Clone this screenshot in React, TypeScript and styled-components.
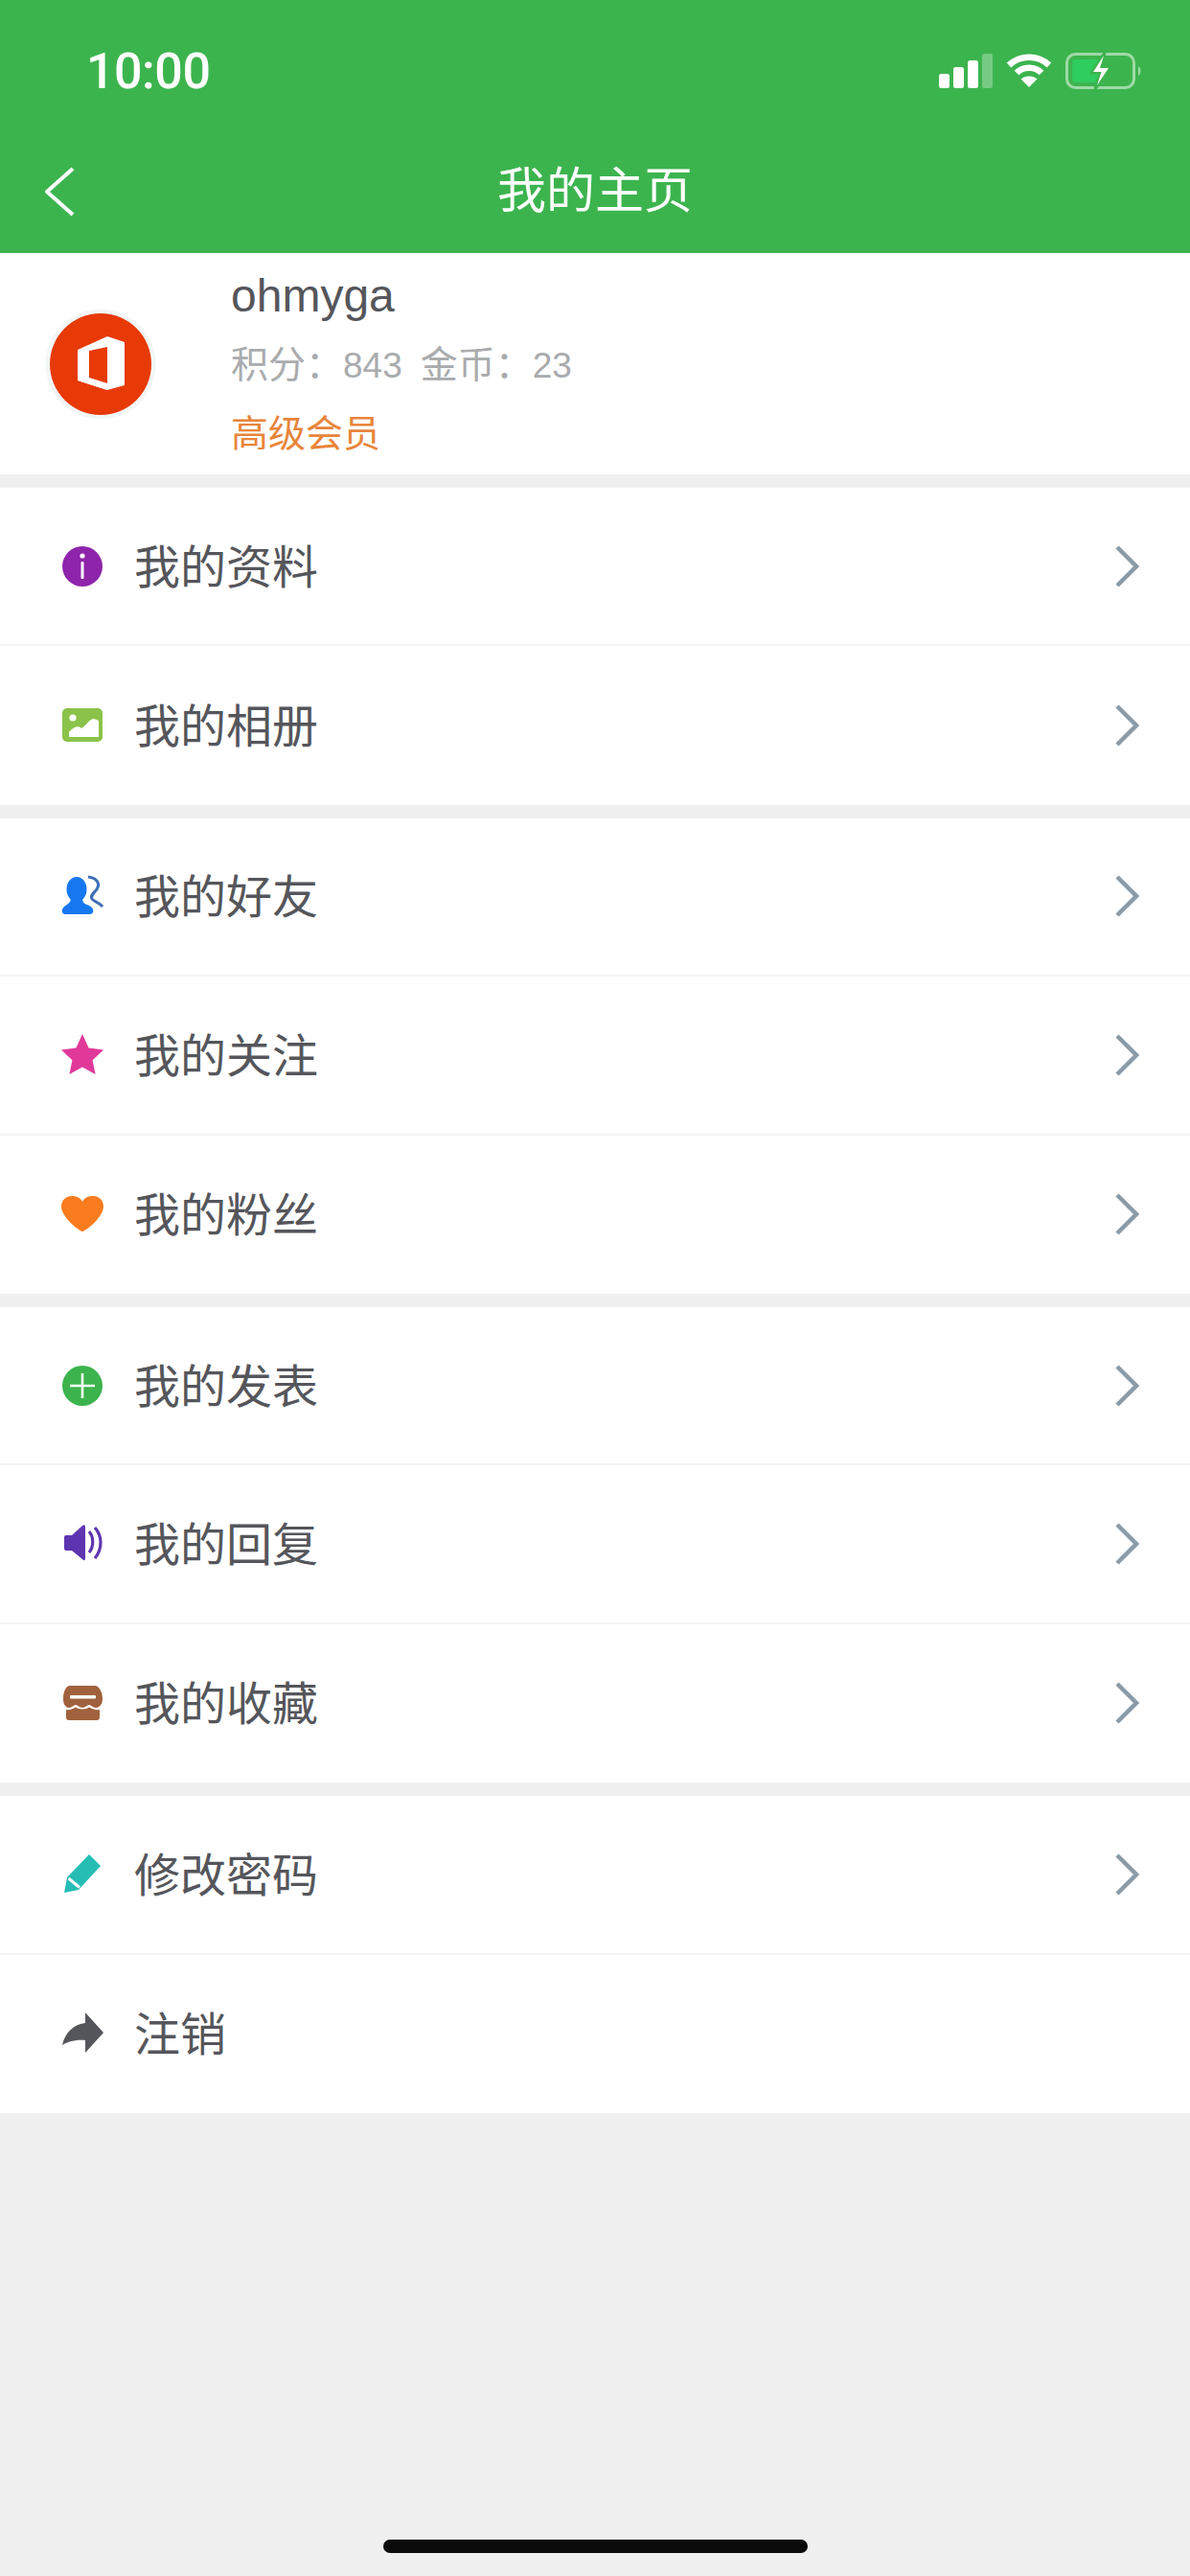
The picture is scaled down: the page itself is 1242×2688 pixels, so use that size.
import React from "react";
import styled, { createGlobalStyle } from "styled-components";

const GlobalStyle = createGlobalStyle`
  html, body {
    margin: 0;
    padding: 0;
    background: #f0f0f0;
  }
  * {
    box-sizing: border-box;
  }
`;

const Page = styled.div`
  position: relative;
  width: 1242px;
  height: 2688px;
  overflow: hidden;
  background: #f0f0f0;
  font-family: "Liberation Sans", "Noto Sans CJK SC", sans-serif;
`;

const Header = styled.header`
  background: #3cb44e;
  color: #fff;
`;

const StatusBar = styled.div`
  height: 148px;
  padding: 0 50px 0 90px;
  display: flex;
  align-items: center;
  justify-content: space-between;
`;

const Time = styled.span`
  font-family: Roboto, "Liberation Sans", sans-serif;
  font-size: 52px;
  font-weight: 500;
  letter-spacing: -0.5px;
`;

const StatusIcons = styled.div`
  display: flex;
  align-items: center;
  gap: 14px;
`;

const NavBar = styled.div`
  height: 116px;
  padding: 0 46px 16px;
  display: grid;
  grid-template-columns: 1fr auto 1fr;
  align-items: center;
`;

const BackSvg = styled.svg`
  width: 32px;
  height: 52px;
  margin-top: 4px;
`;

const Title = styled.h1`
  margin: 0;
  padding-bottom: 6px;
  font-size: 51px;
  font-weight: 400;
`;

const Profile = styled.section`
  height: 231px;
  padding-left: 47px;
  background: #fff;
  display: flex;
  align-items: center;
  gap: 78px;
`;

const Info = styled.div`
  padding-top: 2px;
  line-height: 71px;
`;

const Name = styled.div`
  font-size: 48px;
  color: #55565b;
`;

const Stats = styled.div`
  margin-top: 1px;
  font-size: 39px;
  color: #a9abad;
  display: flex;
  gap: 19px;
`;

const Num = styled.span`
  font-size: 37px;
`;

const Level = styled.div`
  font-size: 39px;
  color: #e8853a;
`;

const Group = styled.section`
  margin-top: 14px;
  background: #fff;
`;

const Row = styled.div`
  height: 165.4px;
  padding: 0 53px 0 64px;
  display: flex;
  align-items: center;
  gap: 32px;
  border-bottom: 2px solid #f4f4f4;

  &:last-child {
    border-bottom: none;
  }
`;

const RowIcon = styled.svg`
  width: 44px;
  height: 44px;
  flex: none;
`;

const RowLabel = styled.span`
  flex: 1;
  padding-bottom: 6px;
  font-size: 48px;
  color: #55565b;
`;

const HomeIndicator = styled.div`
  position: absolute;
  left: 400px;
  bottom: 24px;
  width: 443px;
  height: 14px;
  border-radius: 7px;
  background: #0b0b0b;
`;

const Signal = () => (
  <svg width="58" height="36" viewBox="0 0 58 36">
    <rect x="2" y="21" width="11" height="15" rx="2.5" fill="#fff" />
    <rect x="17" y="14" width="11" height="22" rx="2.5" fill="#fff" />
    <rect x="32" y="7" width="11" height="29" rx="2.5" fill="#fff" />
    <rect x="47" y="0" width="11" height="36" rx="2.5" fill="#fff" opacity="0.3" />
  </svg>
);

const Wifi = () => (
  <svg width="48" height="36" viewBox="0 0 48 36" fill="none" stroke="#fff" strokeWidth="6.5">
    <path d="M3 12 C15 1 33 1 45 12" />
    <path d="M11 20 C18 13 30 13 37 20" />
    <path d="M24 35 L15.5 26.5 C20 22.5 28 22.5 32.5 26.5 Z" fill="#fff" stroke="none" />
  </svg>
);

const Battery = () => (
  <svg width="80" height="38" viewBox="0 0 80 38">
    <rect x="1.5" y="1.5" width="70" height="35" rx="9" fill="none" stroke="#fff" strokeOpacity="0.5" strokeWidth="3" />
    <rect x="7" y="7" width="30" height="24" rx="4" fill="#2fcc5e" />
    <path d="M76 14 C79 15.5 79.5 22 76 24 Z" fill="#fff" fillOpacity="0.5" />
    <path d="M41 0 L27 21 L36 21 L31 38 L47 15 L37.5 15 Z" fill="#3cb44e" stroke="#3cb44e" strokeWidth="3" />
    <path d="M40 3 L29 20 L37.5 20 L33 34 L45 16 L36 16 Z" fill="#fff" />
  </svg>
);

const BackArrow = () => (
  <BackSvg viewBox="0 0 32 52" fill="none" stroke="#fff" strokeWidth="4">
    <path d="M30 2 L3 26 L30 50" strokeLinejoin="round" />
  </BackSvg>
);

const OfficeAvatar = () => (
  <svg width="116" height="116" viewBox="0 0 116 116">
    <circle cx="58" cy="58" r="57.5" fill="#f3f6f7" />
    <circle cx="58" cy="58" r="53" fill="#e73a06" />
    <path d="M34 43 L65 29 L83 35 L83 80 L65 85 L34 75 Z" fill="#fff" />
    <path d="M46 44 L65 40 L65 78 L46 72 Z" fill="#e73a06" />
    <path d="M34 75 L65 78 L65 85 Z" fill="#fff" />
  </svg>
);

const Chevron = () => (
  <svg width="26" height="44" viewBox="0 0 26 44" fill="none" stroke="#8a9ba8" strokeWidth="4.5">
    <path d="M3 2 L23 22 L3 42" />
  </svg>
);

const icons: Record<string, React.ReactNode> = {
  info: (
    <>
      <circle cx="22" cy="22" r="21" fill="#8e24aa" />
      <circle cx="22" cy="11" r="2.6" fill="#fff" />
      <rect x="20.5" y="17" width="3" height="18" rx="1" fill="#fff" />
    </>
  ),
  photo: (
    <>
      <rect x="1" y="4" width="42" height="35" rx="5" fill="#8bc34a" />
      <circle cx="12" cy="14" r="3.6" fill="#fff" />
      <path d="M8 34 L8 29 C13 23 18 22 21 25 C25 23 29 16 33 15 C35 15 37 16 39 17 L39 34 Z" fill="#fff" />
    </>
  ),
  friends: (
    <>
      <ellipse cx="16" cy="15" rx="10.5" ry="13" fill="#1677f0" />
      <path d="M10 24 L22 24 C22 30 25 30 29 32 C33 34 34 37 33 39 C32 41 30 41 28 41 L5 41 C2 41 0 39 1 36 C3 31 10 31 10 24 Z" fill="#1677f0" />
      <path d="M28 2 C37 3 41 9 37 15 C34 19 30 21 32 25 C34 28 40 29 43 33" fill="none" stroke="#3f6fb5" strokeWidth="3" />
    </>
  ),
  star: <path d="M22 0 L28.6 14.6 L44 16.4 L32.6 27.2 L35.6 42 L22 34.6 L8.4 42 L11.4 27.2 L0 16.4 L15.4 14.6 Z" fill="#e0399a" strokeLinejoin="round" />,
  heart: <path d="M22 40 C19 40 0 25 0 14 C0 7 5 3 11 3 C16 3 20 5 22 9 C24 5 28 3 33 3 C39 3 44 7 44 14 C44 25 25 40 22 40 Z" fill="#f97c1f" />,
  plus: (
    <>
      <circle cx="22" cy="22" r="21" fill="#3cb34c" />
      <path d="M9 22 L35 22 M22 9 L22 35" stroke="#fff" strokeWidth="2.6" />
    </>
  ),
  sound: (
    <>
      <path d="M3 15 Q3 13 5 13 L11 13 L22 3 Q25 1 25 4 L25 37 Q25 41 22 38 L11 29 L5 29 Q3 29 3 27 Z" fill="#5e35b1" />
      <path d="M29 9 C34 15 34 25 29 31" fill="none" stroke="#5e35b1" strokeWidth="3.2" />
      <path d="M35 5 C43 14 43 27 35 37" fill="none" stroke="#5e35b1" strokeWidth="3.2" />
    </>
  ),
  box: (
    <g transform="translate(0 2)">
      <path d="M9 2 L35 2 C39 2 43 8 43 16 C43 22 39 25 36 25 C33 25 31 22 29 22 C27 22 25 25 22 25 C19 25 17 22 15 22 C13 22 11 25 8 25 C5 25 2 22 2 16 C2 8 5 2 9 2 Z" fill="#a0623c" />
      <rect x="9" y="12" width="27" height="3.4" rx="1" fill="#fff" />
      <path d="M5 27 C9 28 12 26 15 24.5 C18 27 26 27 29 24.5 C32 26 36 28 40 27 L40 35 Q40 38 37 38 L8 38 Q5 38 5 35 Z" fill="#a0623c" />
    </g>
  ),
  pencil: (
    <>
      <path d="M29 1 L41 13 L18 38 L3 41 L6 25 Z" fill="#26bdb5" />
      <path d="M7.5 26 L19 35.5" stroke="#fff" strokeWidth="3" />
    </>
  ),
  share: <path d="M25 0 L44 21 L25 42 L25 29 C14 28 6 31 1 34 C4 20 14 12 25 11 Z" fill="#55565b" strokeLinejoin="round" />,
};

const groups = [
  [
    { icon: "info", label: "我的资料" },
    { icon: "photo", label: "我的相册" },
  ],
  [
    { icon: "friends", label: "我的好友" },
    { icon: "star", label: "我的关注" },
    { icon: "heart", label: "我的粉丝" },
  ],
  [
    { icon: "plus", label: "我的发表" },
    { icon: "sound", label: "我的回复" },
    { icon: "box", label: "我的收藏" },
  ],
  [
    { icon: "pencil", label: "修改密码" },
    { icon: "share", label: "注销", noArrow: true },
  ],
];

const App = () => {
  return (
    <Page>
      <GlobalStyle />
      <Header>
        <StatusBar>
          <Time>10:00</Time>
          <StatusIcons>
            <Signal />
            <Wifi />
            <Battery />
          </StatusIcons>
        </StatusBar>
        <NavBar>
          <BackArrow />
          <Title>我的主页</Title>
        </NavBar>
      </Header>

      <Profile>
        <OfficeAvatar />
        <Info>
          <Name>ohmyga</Name>
          <Stats>
            <span>积分：<Num>843</Num></span>
            <span>金币：<Num>23</Num></span>
          </Stats>
          <Level>高级会员</Level>
        </Info>
      </Profile>

      {groups.map((rows, i) => (
        <Group key={i}>
          {rows.map((row) => (
            <Row key={row.label}>
              <RowIcon viewBox="0 0 44 44">{icons[row.icon]}</RowIcon>
              <RowLabel>{row.label}</RowLabel>
              {!("noArrow" in row) && <Chevron />}
            </Row>
          ))}
        </Group>
      ))}

      <HomeIndicator />
    </Page>
  );
};

export default App;
